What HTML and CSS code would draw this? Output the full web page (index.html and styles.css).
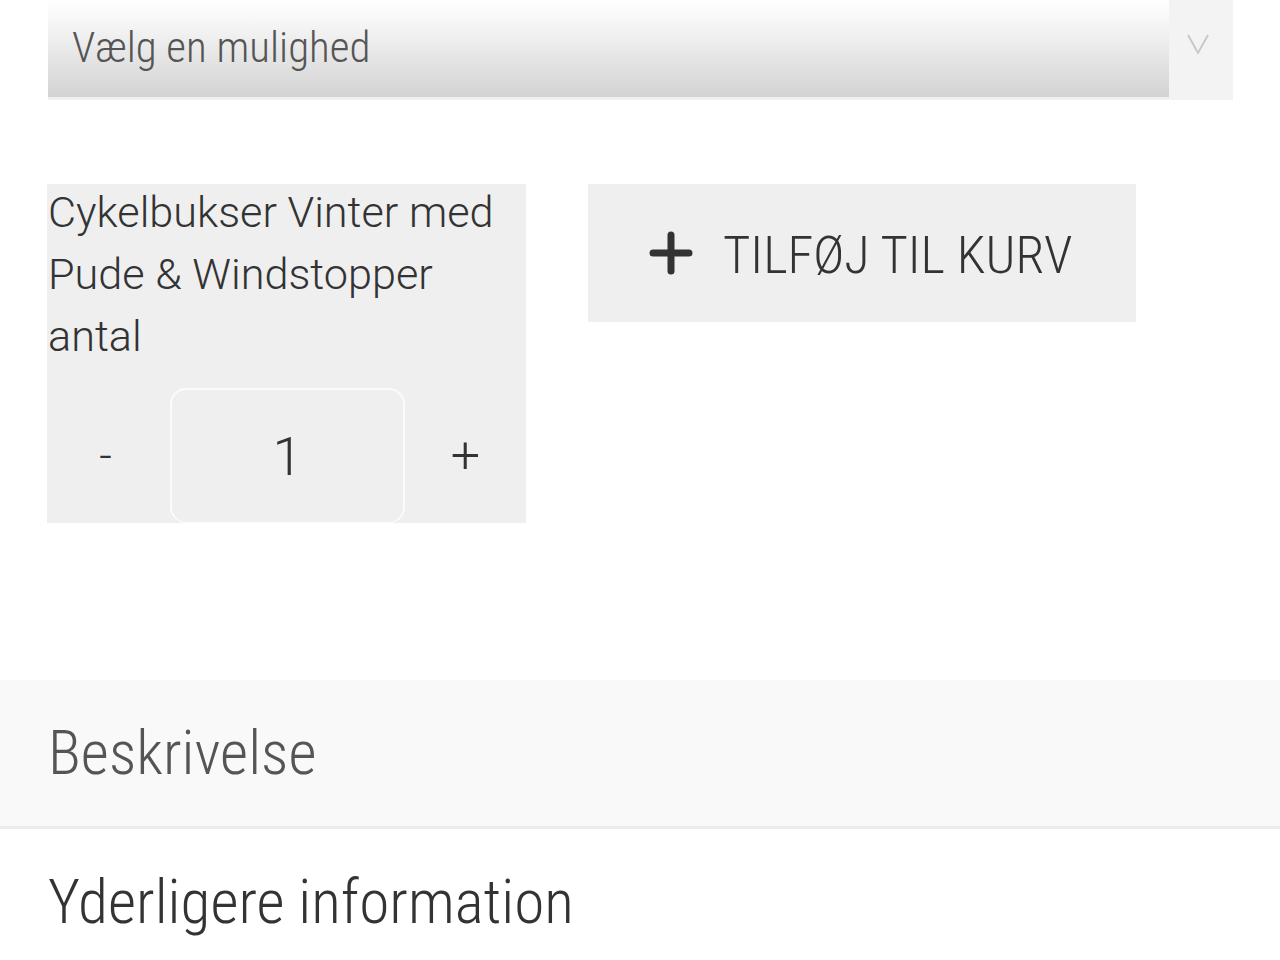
FILE: index.html
```html
<!DOCTYPE html>
<html lang="da">
<head>
<meta charset="utf-8">
<title>Produkt</title>
<link rel="stylesheet" href="styles.css">
</head>
<body>
<div class="page">
  <div class="variation">
    <div class="select"><span class="select-text">Vælg en mulighed</span></div>
    <div class="select-arrow">
      <svg class="chevron" width="24" height="22" viewBox="0 0 24 22"><path d="M2 2 L12 20 L22 2" fill="none" stroke="#c6c6c6" stroke-width="1.8"/></svg>
    </div>
  </div>

  <div class="cart-row">
    <div class="qty-box">
      <p class="qty-label">Cykelbukser Vinter med<br>Pude &amp; Windstopper<br>antal</p>
      <div class="qty-controls">
        <div class="qty-btn minus">-</div>
        <div class="qty-input">1</div>
        <div class="qty-btn plus">+</div>
      </div>
    </div>
    <div class="add-btn">
      <svg class="add-icon" width="44" height="44" viewBox="0 0 44 44"><path d="M22 4 V40 M4 22 H40" stroke="#333" stroke-width="7" stroke-linecap="round"/></svg>
      <span class="add-text">TILFØJ TIL KURV</span>
    </div>
  </div>

  <div class="tabs">
    <div class="tab active">Beskrivelse</div>
    <div class="tab">Yderligere information</div>
  </div>
</div>
</body>
</html>
```

FILE: styles.css
```css
html, body {
  margin: 0;
  padding: 0;
  background: #fff;
}
body {
  font-family: "Roboto", "Liberation Sans", sans-serif;
  color: #333;
}
.page {
  width: 1280px;
  overflow: hidden;
}
.variation {
  display: flex;
  margin: 0 47px 0 48px;
  height: 100px;
  background: #f0f0f0;
}
.select {
  flex: 1;
  height: 97px;
  background: linear-gradient(to bottom, #ffffff 0%, #f7f7f7 20%, #ececec 45%, #dedede 75%, #d2d2d2 100%);
  display: flex;
  align-items: center;
  padding-left: 24px;
  box-sizing: border-box;
}
.select-text {
  font-family: "Roboto Condensed", "Roboto", sans-serif;
  font-stretch: 80%;
  font-weight: 300;
  font-size: 43px;
  color: #555;
  padding-bottom: 4px;
}
.select-arrow {
  width: 64px;
  background: #f3f3f3;
  display: flex;
  justify-content: center;
  align-items: flex-start;
  padding-top: 33px;
  padding-right: 6px;
  box-sizing: border-box;
}
.cart-row {
  display: flex;
  align-items: flex-start;
  margin: 84px 0 0 47px;
}
.qty-box {
  width: 479px;
  height: 339px;
  background: #efefef;
  box-sizing: border-box;
}
.qty-label {
  margin: -2px 0 0 0;
  padding: 0 0 0 1px;
  font-size: 43.2px;
  line-height: 62px;
  font-weight: 300;
  color: #333;
}
.qty-controls {
  display: flex;
  margin-top: 20px;
  height: 135px;
}
.qty-btn {
  display: flex;
  align-items: center;
  justify-content: center;
  font-weight: 300;
  color: #333;
}
.qty-btn.minus {
  width: 117px;
  padding-right: 6px;
  font-size: 44px;
}
.qty-btn.plus {
  width: 121px;
  font-size: 52px;
}
.qty-input {
  width: 235px;
  box-sizing: border-box;
  border: 2px solid #fbfbfb;
  border-bottom-width: 1px;
  border-radius: 16px;
  display: flex;
  align-items: center;
  justify-content: center;
  font-size: 54px;
  font-weight: 300;
  color: #333;
}
.add-btn {
  margin-left: 62px;
  width: 548px;
  height: 138px;
  background: #efefef;
  display: flex;
  align-items: center;
  padding-left: 61px;
  padding-top: 4px;
  box-sizing: border-box;
  gap: 30px;
}
.add-icon {
  margin-top: -4px;
}
.add-text {
  font-family: "Roboto Condensed", "Roboto", sans-serif;
  font-stretch: 80%;
  font-weight: 300;
  font-size: 52.5px;
  color: #333;
}
.tabs {
  margin-top: 157px;
}
.tab {
  height: 146px;
  display: flex;
  align-items: center;
  padding-left: 48px;
  font-family: "Roboto Condensed", "Roboto", sans-serif;
  font-stretch: 80%;
  font-weight: 300;
  font-size: 61.3px;
  color: #333;
}
.tab.active {
  background: #f9f9f9;
  color: #555;
  border-bottom: 3px solid #ebebeb;
}
```
